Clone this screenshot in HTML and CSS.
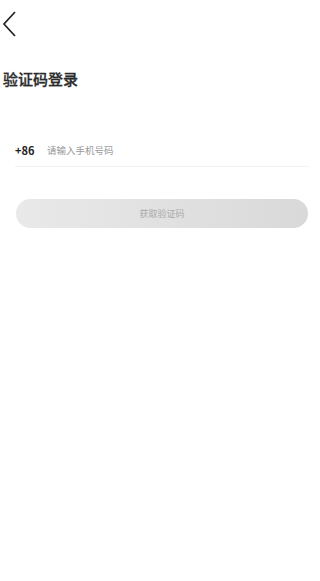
FILE: index.html
```html
<!DOCTYPE html>
<html lang="zh-CN">
  <head>
    <meta charset="UTF-8" />
    <meta name="viewport" content="width=device-width, initial-scale=1.0" />
    <title>验证码登录</title>
    <link rel="stylesheet" href="styles.css">
  </head>
  <body>
    <!-- Top bar -->
    <header class="topbar">
      <a class="back-btn" href="#">
        <svg width="14" height="26" viewBox="0 0 14 26">
          <polyline points="13,1 2,13 13,25" fill="none" stroke="#222" stroke-width="1.7" />
        </svg>
      </a>
    </header>

    <h1 class="page-title">验证码登录</h1>

    <!-- Login form -->
    <form class="login-form">
      <div class="phone-row">
        <span class="area-code">+86</span>
        <input class="phone-input" type="tel" placeholder="请输入手机号码" />
      </div>
      <button class="code-btn" type="button">获取验证码</button>
    </form>
  </body>
</html>
```

FILE: styles.css
```css
body {
  font-family: "Noto Sans CJK SC", "Noto Sans", sans-serif;
  margin: 0;
  padding: 0;
  background: #fff;
  color: #333;
}
.topbar {
  height: 48px;
  display: flex;
  align-items: center;
  padding-left: 2px;
}
.back-btn {
  display: flex;
}
.page-title {
  margin: 20px 0 0 3px;
  font-size: 15px;
  font-weight: 500;
  line-height: 22px;
  color: #2b2b2b;
  -webkit-text-stroke: 0.3px #2b2b2b;
}
.login-form {
  padding: 0 12px 0 15px;
  margin-top: 44px;
}
.phone-row {
  display: flex;
  align-items: center;
  height: 32px;
  border-bottom: 1px solid #f3f3f3;
  margin-right: -1px;
}
.area-code {
  font-size: 11px;
  font-weight: bold;
  color: #222;
  width: 32px;
}
.phone-input {
  border: none;
  outline: none;
  padding: 0;
  font-family: inherit;
  font-size: 9.5px;
  color: #333;
  flex: 1;
}
.phone-input::placeholder {
  color: #999;
}
.code-btn {
  display: block;
  width: calc(100% - 1px);
  height: 29px;
  margin-top: 32px;
  margin-left: 1px;
  border: none;
  border-radius: 15px;
  background: linear-gradient(to right, #e9e9e9, #d9d9d9);
  color: #aaa;
  font-family: inherit;
  font-size: 9px;
  cursor: pointer;
}
```
